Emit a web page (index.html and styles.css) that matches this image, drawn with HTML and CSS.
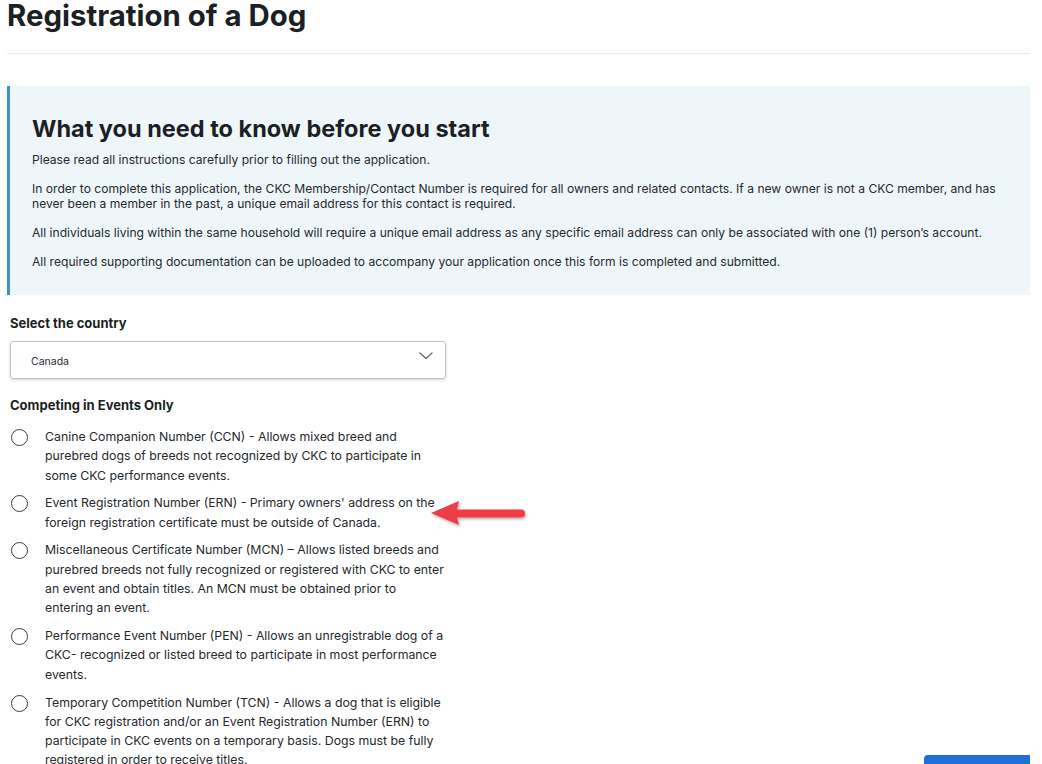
FILE: index.html
```html
<!DOCTYPE html>
<html lang="en">
<head>
<meta charset="utf-8">
<title>Registration of a Dog</title>
<link rel="stylesheet" href="styles.css">
</head>
<body>
<div class="page">
  <h1 class="title">Registration of a Dog</h1>
  <hr class="rule">
  <section class="info">
    <h2 class="info-title">What you need to know before you start</h2>
    <p>Please read all instructions carefully prior to filling out the application.</p>
    <p>In order to complete this application, the CKC Membership/Contact Number is required for all owners and related contacts. If a new owner is not a CKC member, and has never been a member in the past, a unique email address for this contact is required.</p>
    <p>All individuals living within the same household will require a unique email address as any specific email address can only be associated with one (1) person’s account.</p>
    <p>All required supporting documentation can be uploaded to accompany your application once this form is completed and submitted.</p>
  </section>

  <div class="form">
    <label class="field-label">Select the country</label>
    <div class="select">
      <span class="select-value">Canada</span>
      <svg class="chevron" width="14" height="8" viewBox="0 0 14 8"><path d="M1 1l6 5.5L13 1" fill="none" stroke="#6b7078" stroke-width="1.4" stroke-linecap="round" stroke-linejoin="round"/></svg>
    </div>

    <div class="field-label group-label">Competing in Events Only</div>
    <ul class="radios">
      <li class="radio"><span class="circle"></span><span class="radio-text">Canine Companion Number (CCN) - Allows mixed breed and purebred dogs of breeds not recognized by CKC to participate in some CKC performance events.</span></li>
      <li class="radio arrow-host"><span class="circle"></span><span class="radio-text">Event Registration Number (ERN) - Primary owners' address on the foreign registration certificate must be outside of Canada.</span>
        <svg class="arrow" width="100" height="30" viewBox="0 0 100 30"><defs><filter id="sh" x="-20%" y="-40%" width="140%" height="180%"><feDropShadow dx="1" dy="1.5" stdDeviation="1.5" flood-color="#000" flood-opacity="0.35"/></filter></defs><g filter="url(#sh)"><path d="M2 14 L30 2 L28 10.5 L92 10.5 Q96 10.5 96 14.5 Q96 18.5 92 18.5 L28 18.5 L30 26 Z" fill="#ee3c45"/></g></svg>
      </li>
      <li class="radio"><span class="circle"></span><span class="radio-text">Miscellaneous Certificate Number (MCN) – Allows listed breeds and purebred breeds not fully recognized or registered with CKC to enter an event and obtain titles. An MCN must be obtained prior to entering an event.</span></li>
      <li class="radio"><span class="circle"></span><span class="radio-text">Performance Event Number (PEN) - Allows an unregistrable dog of a CKC- recognized or listed breed to participate in most performance events.</span></li>
      <li class="radio"><span class="circle"></span><span class="radio-text">Temporary Competition Number (TCN) - Allows a dog that is eligible for CKC registration and/or an Event Registration Number (ERN) to participate in CKC events on a temporary basis. Dogs must be fully registered in order to receive titles.</span></li>
    </ul>
  </div>
</div>
<button class="help-btn">Click</button>
</body>
</html>
```
FILE: styles.css
```css
html, body {
  margin: 0;
  padding: 0;
  background: #ffffff;
}
body {
  font-family: Inter, "Noto Sans", "Liberation Sans", sans-serif;
  color: #1f2327;
  overflow: hidden;
  height: 764px;
  position: relative;
}
.page {
  width: 1023px;
  padding: 0 0 0 7px;
}
.title {
  margin: 0;
  font-size: 29.4px;
  font-weight: 700;
  line-height: 32px;
  color: #1c1f23;
}
.rule {
  margin: 21px 0 0 0;
  border: 0;
  border-top: 1px solid #e6e8ea;
  height: 0;
}
.info {
  margin-top: 32px;
  background: #eff6fa;
  border-left: 3px solid #3d8fd1;
  padding: 29px 24px 24px 22px;
  height: 156px;
}
.info-title {
  margin: 0 0 9px 0;
  font-size: 23.5px;
  line-height: 28px;
  font-weight: 700;
  color: #1c1f23;
}
.info p {
  margin: 0 0 14px 0;
  font-size: 12.1px;
  line-height: 15px;
  color: #26292d;
}
.form {
  padding: 20px 0 0 3px;
}
.field-label {
  display: block;
  font-size: 13px;
  font-weight: 700;
  line-height: 16px;
  color: #1c1f23;
}
.select {
  margin-top: 10px;
  width: 436px;
  height: 38px;
  box-sizing: border-box;
  border: 1px solid #b9c6d4;
  border-radius: 3px;
  box-shadow: 0 1px 3px rgba(0,0,0,0.18);
  display: flex;
  align-items: center;
  justify-content: space-between;
  padding: 0 12px 0 20px;
}
.select-value {
  font-size: 10.5px;
  color: #2a2d31;
  margin-top: 3px;
}
.chevron {
  margin-top: -9px;
}
.group-label {
  margin-top: 18px;
}
.radios {
  list-style: none;
  margin: 16px 0 0 0;
  padding: 0;
}
.radio {
  display: flex;
  align-items: flex-start;
  margin-bottom: 10.5px;
  position: relative;
}
.circle {
  flex: none;
  width: 15px;
  height: 15px;
  border: 1.6px solid #3a3d41;
  border-radius: 50%;
  margin: 0 17px 0 1px;
}
.radio-text {
  width: 402px;
  font-size: 12.3px;
  line-height: 19.3px;
  color: #26292d;
  margin-top: -2px;
}
.arrow {
  position: absolute;
  left: 419px;
  top: 4px;
}
.help-btn {
  position: absolute;
  left: 924px;
  top: 755px;
  width: 106px;
  height: 30px;
  border: 0;
  border-radius: 4px 0 0 0;
  background: #1e6fd6;
  color: #fff;
  font-family: Inter, "Liberation Sans", sans-serif;
  font-weight: 700;
  font-size: 12px;
  text-align: right;
  padding: 3px 0 0 0;
  line-height: 12px;
  display: block;
  overflow: hidden;
  white-space: nowrap;
}
```
